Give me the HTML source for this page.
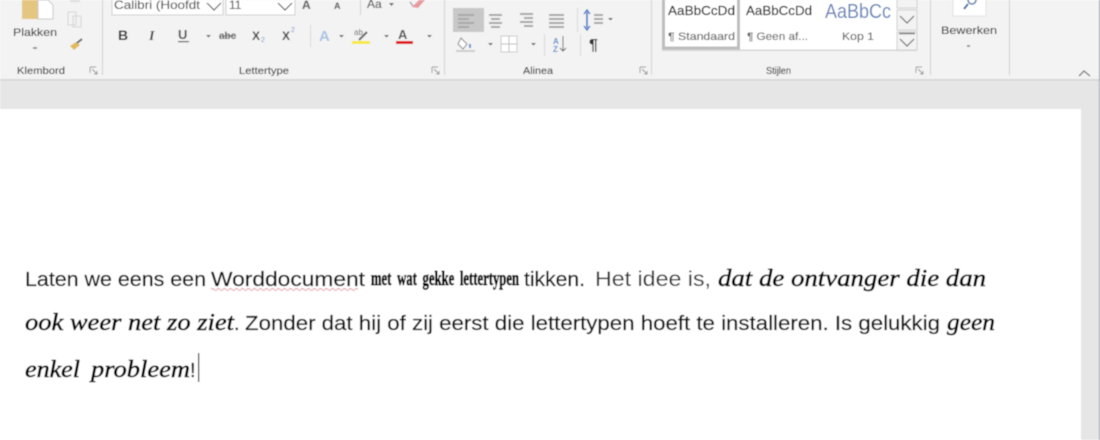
<!DOCTYPE html>
<html><head><meta charset="utf-8"><style>
html,body{margin:0;padding:0;background:#fff;width:1100px;height:440px;overflow:hidden}
svg{display:block}
.u{font-family:"Liberation Sans",sans-serif;font-size:11px;fill:#333;stroke:#444;stroke-width:.12px}
.d{font-family:"Liberation Sans",sans-serif;font-size:20px;fill:#111;stroke:#111;stroke-width:.25px}
.s{font-family:"Liberation Serif",serif;font-style:italic;font-size:24px;fill:#000;stroke:#000;stroke-width:.55px}
</style></head><body>
<svg width="1100" height="440" viewBox="0 0 1100 440" xmlns="http://www.w3.org/2000/svg">
<defs><filter id="b" x="-2%" y="-2%" width="104%" height="104%"><feGaussianBlur stdDeviation="0.45"/></filter></defs>
<rect width="1100" height="440" fill="#fff"/>
<g filter="url(#b)">
<!-- chrome -->
<rect width="1100" height="79" fill="#f3f3f3"/>
<rect y="79" width="1100" height="2" fill="#d8d8d8"/>
<rect y="81" width="1100" height="28" fill="#e6e6e6"/>
<rect x="1081" y="81" width="19" height="359" fill="#e6e6e6"/>
<rect x="1099" y="0" width="1" height="440" fill="#8a9db0"/>
<!-- group separators -->
<g fill="#d2d2d2"><rect x="102" width="1" height="75"/><rect x="444" width="1" height="75"/><rect x="651" width="1" height="75"/><rect x="930" width="1" height="75"/><rect x="1009" width="1" height="75"/></g>
<!-- clipboard -->
<rect x="22" y="0" width="16" height="19" fill="#e5c680"/>
<path d="M38 0H48L53 5V19H38Z" fill="#fff" stroke="#c9c9c9"/>
<text x="13" y="36" class="u" textLength="44" lengthAdjust="spacingAndGlyphs">Plakken</text>
<path d="M33 48h4" stroke="#777" stroke-width="1.5"/>
<path d="M70 1h10" stroke="#ddd" stroke-width="2"/>
<path d="M68 12h8v13h-8zM73 16h8v11h-8z" fill="#f3f3f3" stroke="#d5d5d5"/>
<path d="M70 46l6-4 4 3-6 5z" fill="#e2b95e"/><path d="M77 43l5-4" stroke="#666" stroke-width="2"/>
<text x="17" y="74" class="u" style="font-size:10.5px" textLength="48" lengthAdjust="spacingAndGlyphs">Klembord</text>
<path d="M90 67h6M90 67v6M92 69l5 5M97 71v3h-3" stroke="#999" fill="none"/>
<!-- font -->
<rect x="112" y="-1" width="111" height="16" fill="#fff" stroke="#d0d0d0"/>
<rect x="226" y="-1" width="69" height="16" fill="#fff" stroke="#d0d0d0"/>
<text x="114" y="9" class="u" style="font-size:12px;fill:#555" textLength="86" lengthAdjust="spacingAndGlyphs">Calibri (Hoofdt</text>
<text x="229" y="9" class="u" style="font-size:12px;fill:#555">11</text>
<path d="M207 3l7 7 7-7M278 3l7 7 7-7" fill="none" stroke="#555" stroke-width="1.2"/>
<text x="302" y="9" class="u" style="font-size:12px;font-weight:bold;fill:#666">A</text>
<text x="334" y="9" class="u" style="font-size:9px;font-weight:bold;fill:#666">A</text>
<rect x="360" y="0" width="1" height="15" fill="#d2d2d2"/>
<text x="367" y="8" class="u" style="font-size:12px;fill:#555">Aa</text>
<path d="M389 3h5l-2.500 3z" fill="#666"/>
<path d="M412 7l7-7h6l-7 8z" fill="#e89aa0"/><path d="M410 2l3 4" stroke="#777"/>
<text x="118" y="40" style="font:bold 14px 'Liberation Sans',sans-serif;fill:#333">B</text>
<text x="149" y="40" style="font:italic bold 14px 'Liberation Serif',serif;fill:#444">I</text>
<text x="178" y="39" style="font:bold 13px 'Liberation Sans',sans-serif;fill:#555">U</text><rect x="178" y="41" width="11" height="1.200" fill="#555"/>
<path d="M206 35h5l-2.500 2.500zM339 35h5l-2.500 2.500zM384 35h5l-2.500 2.500zM427 35h5l-2.500 2.500z" fill="#666"/>
<text x="219" y="39" style="font:bold 10px 'Liberation Sans',sans-serif;fill:#555">abc</text><rect x="219" y="35.500" width="17" height="1" fill="#666"/>
<text x="252" y="40" style="font:bold 12px 'Liberation Sans',sans-serif;fill:#444">X</text><text x="261" y="42" style="font:7px 'Liberation Sans',sans-serif;fill:#6b94c7">2</text>
<text x="282" y="40" style="font:bold 12px 'Liberation Sans',sans-serif;fill:#444">X</text><text x="291" y="32" style="font:7px 'Liberation Sans',sans-serif;fill:#6b94c7">2</text>
<rect x="310" y="25" width="1" height="22" fill="#d8d8d8"/>
<text x="319" y="41" style="font:bold 15px 'Liberation Sans',sans-serif;fill:#a9c4e4">A</text>
<text x="354" y="35" style="font:8px 'Liberation Sans',sans-serif;fill:#666">ab</text>
<path d="M359 40l8-8" stroke="#666" stroke-width="2"/>
<rect x="352" y="41" width="18" height="3" fill="#f6ea3c"/>
<text x="398" y="39" style="font:bold 13px 'Liberation Sans',sans-serif;fill:#555">A</text>
<rect x="396" y="41" width="17" height="3" fill="#e0141c"/>
<text x="239" y="74" class="u" style="font-size:10.5px" textLength="50" lengthAdjust="spacingAndGlyphs">Lettertype</text>
<path d="M432 67h6M432 67v6M434 69l5 5M439 71v3h-3" stroke="#999" fill="none"/>
<!-- paragraph -->
<rect x="453" y="8" width="31" height="24" fill="#c8c8c8"/>
<g stroke="#a8a8a8" stroke-width="2">
<path d="M458 15h16M458 19h11M458 23h16M458 27h11"/>
<path d="M489 15h13M491 19h9M489 23h13M491 27h9"/>
<path d="M520 14h13M524 18h9M520 22h13M524 26h9"/>
<path d="M549 15h15M549 19h15M549 23h15M549 27h15"/>
<path d="M594 15h9M594 19h9M594 23h9"/>
</g>
<path d="M587 12v16" stroke="#2f6fbf" stroke-width="1.500"/><path d="M584 14l3-4 3 4M584 26l3 4 3-4" stroke="#2f6fbf" fill="none" stroke-width="1.300"/>
<path d="M608 18h5l-2.500 2.500zM488 43h5l-2.500 2.500zM531 43h5l-2.500 2.500z" fill="#666"/>
<rect x="577" y="8" width="1" height="24" fill="#d8d8d8"/><rect x="544" y="34" width="1" height="22" fill="#d8d8d8"/><rect x="580" y="34" width="1" height="22" fill="#d8d8d8"/>
<path d="M461 38l6 6-4 5-5-5z" fill="#fff" stroke="#888"/><rect x="456" y="50" width="19" height="2" fill="#ccc"/><path d="M470 44v4" stroke="#5e94d0" stroke-width="2"/>
<rect x="501" y="36" width="16" height="16" fill="#fff" stroke="#ccc"/><path d="M509 36v16M501 44h16" stroke="#bbb"/>
<text x="553" y="44" style="font:bold 8px 'Liberation Sans',sans-serif;fill:#5b8ecb">A</text><text x="553" y="52" style="font:bold 8px 'Liberation Sans',sans-serif;fill:#5b8ecb">Z</text>
<path d="M563 36v15M560 48l3 3 3-3" stroke="#666" fill="none"/>
<text x="589" y="50" style="font:bold 16px 'Liberation Sans',sans-serif;fill:#333">¶</text>
<text x="523" y="74" class="u" style="font-size:10.5px" textLength="30" lengthAdjust="spacingAndGlyphs">Alinea</text>
<path d="M640 67h6M640 67v6M642 69l5 5M647 71v3h-3" stroke="#999" fill="none"/>
<!-- styles -->
<rect x="662" y="-2" width="235" height="52" fill="#fff"/>
<rect x="663.500" y="-3" width="75" height="51" fill="#fff" stroke="#bdbdbd" stroke-width="3"/>
<rect x="662" y="49.500" width="255" height="1.500" fill="#d5d5d5"/>
<text x="668" y="15" style="font:13px 'Liberation Sans',sans-serif;fill:#111;stroke:#111;stroke-width:.15px" textLength="67" lengthAdjust="spacingAndGlyphs">AaBbCcDd</text>
<text x="746" y="15" style="font:13px 'Liberation Sans',sans-serif;fill:#111;stroke:#111;stroke-width:.15px" textLength="66" lengthAdjust="spacingAndGlyphs">AaBbCcDd</text>
<text x="825" y="18" style="font:20px 'Liberation Sans',sans-serif;fill:#6381b5" textLength="66" lengthAdjust="spacingAndGlyphs">AaBbCc</text>
<text x="668" y="40" class="u" style="fill:#666" textLength="67" lengthAdjust="spacingAndGlyphs">¶ Standaard</text>
<text x="747" y="40" class="u" style="fill:#666" textLength="61" lengthAdjust="spacingAndGlyphs">¶ Geen af...</text>
<text x="842" y="40" class="u" style="fill:#666" textLength="32" lengthAdjust="spacingAndGlyphs">Kop 1</text>
<rect x="897" y="-1" width="20" height="9" fill="#f3f3f3" stroke="#d0d0d0"/>
<rect x="897" y="10" width="20" height="20" fill="#f3f3f3" stroke="#d0d0d0"/>
<rect x="897" y="32" width="20" height="18" fill="#f3f3f3" stroke="#d0d0d0"/>
<path d="M900 16l7 7 7-7M900 39l7 7 7-7" fill="none" stroke="#666" stroke-width="1.200"/><path d="M899 33.500h16" stroke="#777" stroke-width="1.500"/>
<text x="766" y="74" class="u" style="font-size:10.5px" textLength="25" lengthAdjust="spacingAndGlyphs">Stijlen</text>
<path d="M916 67h6M916 67v6M918 69l5 5M923 71v3h-3" stroke="#999" fill="none"/>
<!-- edit -->
<rect x="953" y="-1" width="33" height="17" fill="#fff" stroke="#e2e2e2"/>
<circle cx="972" cy="0" r="4" fill="none" stroke="#5580b0" stroke-width="1.500"/><path d="M968 4l-4 5" stroke="#3f6fa5" stroke-width="2"/>
<text x="941" y="34" class="u" textLength="56" lengthAdjust="spacingAndGlyphs">Bewerken</text>
<path d="M967 46h3" stroke="#777" stroke-width="1.500"/>
<path d="M1079 76l5-5 6 5" fill="none" stroke="#777" stroke-width="1.300"/>
<!-- document -->
<rect x="0" y="109" width="1081" height="331" fill="#fff"/>
<text x="25" y="286" class="d" textLength="181" lengthAdjust="spacingAndGlyphs">Laten we eens een</text>
<text x="211" y="286" class="d" textLength="154" lengthAdjust="spacingAndGlyphs">Worddocument</text>
<path d="M211 289.500q1.500-2 3 0t3 0 3 0 3 0 3 0 3 0 3 0 3 0 3 0 3 0 3 0 3 0 3 0 3 0 3 0 3 0 3 0 3 0 3 0 3 0 3 0 3 0 3 0 3 0 3 0 3 0 3 0 3 0 3 0 3 0 3 0 3 0 3 0 3 0 3 0 3 0 3 0 3 0 3 0 3 0 3 0 3 0 3 0 3 0 3 0 3 0 3 0 3 0 3 0" fill="none" stroke="#e79aa0"/>
<text x="371" y="285" textLength="148" lengthAdjust="spacingAndGlyphs" style="font:bold 20px 'Liberation Serif',serif;fill:#000;stroke:#000;stroke-width:.7px;word-spacing:4px">met wat gekke lettertypen</text>
<text x="524" y="286" class="d" textLength="61" lengthAdjust="spacingAndGlyphs">tikken.</text>
<text x="595" y="286" class="d" style="font-size:21px;fill:#333;stroke:none" textLength="116" lengthAdjust="spacingAndGlyphs">Het idee is,</text>
<text x="718" y="286" class="s" textLength="268" lengthAdjust="spacingAndGlyphs">dat de ontvanger die dan</text>
<text x="25" y="330" class="s" textLength="209" lengthAdjust="spacingAndGlyphs">ook weer net zo ziet</text>
<text x="234" y="330" class="d">.</text>
<text x="245" y="330" class="d" textLength="695" lengthAdjust="spacingAndGlyphs">Zonder dat hij of zij eerst die lettertypen hoeft te installeren. Is gelukkig</text>
<text x="947" y="330" class="s" textLength="48" lengthAdjust="spacingAndGlyphs">geen</text>
<text x="25" y="377" class="s" textLength="55" lengthAdjust="spacingAndGlyphs">enkel</text>
<text x="91" y="377" class="s" textLength="99" lengthAdjust="spacingAndGlyphs">probleem</text>
<text x="190" y="377" class="d" style="fill:#222">!</text>
<rect x="198" y="353" width="1.200" height="29" fill="#111"/>
</g>
</svg>
</body></html>
